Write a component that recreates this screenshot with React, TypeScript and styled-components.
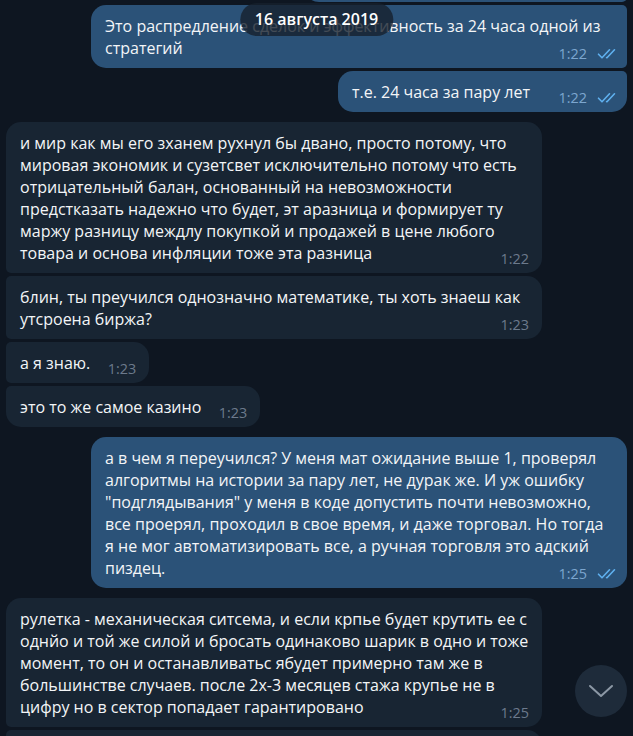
import React from 'react';
import styled, { createGlobalStyle, css } from 'styled-components';

const GlobalStyle = createGlobalStyle`
  html, body {
    margin: 0;
    padding: 0;
    background: #0e1621;
  }
  body {
    font-family: "Open Sans", "Noto Sans", "DejaVu Sans", sans-serif;
    -webkit-font-smoothing: antialiased;
  }
`;

type Side = 'in' | 'out';
type Pos = 'single' | 'first' | 'middle' | 'last';

const Screen = styled.div`
  position: relative;
  width: 633px;
  height: 736px;
  overflow: hidden;
  background: #0e1621;
`;

// scroll offset: the previous message is only just visible at the top
const Feed = styled.div`
  display: flex;
  flex-direction: column;
  padding: 0 6px;
  margin-top: -39px;
`;

const Group = styled.div<{ $side: Side }>`
  display: flex;
  flex-direction: column;
  align-items: ${(p) => (p.$side === 'out' ? 'flex-end' : 'flex-start')};
  gap: 3px;
  margin-bottom: 10px;
`;

const big = '15px';
const small = '5px';

const radius = (side: Side, pos: Pos) => {
  const topIn = pos === 'middle' || pos === 'last' ? small : big;
  const botIn = pos === 'first' || pos === 'middle' ? small : big;
  if (side === 'in') return `${topIn} ${big} ${big} ${botIn}`;
  return `${big} ${topIn} ${botIn} ${big}`;
};

const Bubble = styled.div<{ $side: Side; $pos: Pos }>`
  position: relative;
  box-sizing: border-box;
  max-width: 536px;
  padding: 10px 13px 9px 14px;
  border-radius: ${(p) => radius(p.$side, p.$pos)};
  background: ${(p) => (p.$side === 'out' ? '#2b5278' : '#182533')};
  color: #f3f5f7;
  font-size: 16px;
  line-height: 22px;
  word-wrap: break-word;
`;

const Spacer = styled.span<{ $side: Side }>`
  display: inline-block;
  width: ${(p) => (p.$side === 'out' ? '84px' : '46px')};
  height: 1px;
`;

const Meta = styled.span<{ $side: Side }>`
  position: absolute;
  right: ${(p) => (p.$side === 'out' ? '9px' : '13px')};
  bottom: 6px;
  display: flex;
  align-items: center;
  gap: 10px;
  font-size: 14.4px;
  line-height: 16px;
  ${(p) =>
    p.$side === 'out'
      ? css`
          color: #7ca6cf;
        `
      : css`
          color: #6c7a8c;
        `}
`;

const DateBadge = styled.div`
  position: absolute;
  top: 3px;
  left: 50%;
  transform: translateX(-50%);
  padding: 6px 15px 7px;
  border-radius: 17px;
  background: rgba(22, 33, 45, 0.8);
  color: #ffffff;
  font-size: 16px;
  font-weight: 600;
  line-height: 20px;
  white-space: nowrap;
`;

const ScrollDown = styled.button`
  position: absolute;
  right: 6px;
  bottom: 19px;
  width: 52px;
  height: 52px;
  padding: 0;
  border: none;
  border-radius: 50%;
  background: #1e2b3a;
  display: flex;
  align-items: center;
  justify-content: center;
  cursor: pointer;
`;

function Checks() {
  return (
    <svg width="21" height="12" viewBox="0 0 21 12" fill="none">
      <path d="M1.5 6.2 L5 9.8 L12.5 1.8" stroke="#5fb0ee" strokeWidth="1.6" strokeLinecap="round" strokeLinejoin="round" />
      <path d="M9.6 9.6 L10 9.8 L17.5 1.8" stroke="#5fb0ee" strokeWidth="1.6" strokeLinecap="round" strokeLinejoin="round" />
    </svg>
  );
}

function Message({ side, pos, time, children }: { side: Side; pos: Pos; time: string; children: React.ReactNode }) {
  return (
    <Bubble $side={side} $pos={pos}>
      {children}
      <Spacer $side={side} />
      <Meta $side={side}>
        {time}
        {side === 'out' && <Checks />}
      </Meta>
    </Bubble>
  );
}

export default function App() {
  return (
    <>
      <GlobalStyle />
      <Screen>
        <Feed>
          <Group $side="out">
            <Message side="out" pos="first" time="1:21">
              вот так это выглядит за год
            </Message>
            <Message side="out" pos="middle" time="1:22">
              Это распредление сделок и эффективность за 24 часа одной из стратегий
            </Message>
            <Message side="out" pos="last" time="1:22">
              т.е. 24 часа за пару лет
            </Message>
          </Group>
          <Group $side="in">
            <Message side="in" pos="first" time="1:22">
              и мир как мы его зханем рухнул бы двано, просто потому, что мировая экономик и сузетсвет
              исключительно потому что есть отрицательный балан, основанный на невозможности предстказать
              надежно что будет, эт аразница и формирует ту маржу разницу междлу покупкой и продажей в цене
              любого товара и основа инфляции тоже эта разница
            </Message>
            <Message side="in" pos="middle" time="1:23">
              блин, ты преучился однозначно математике, ты хоть знаеш как утсроена биржа?
            </Message>
            <Message side="in" pos="middle" time="1:23">
              а я знаю.
            </Message>
            <Message side="in" pos="last" time="1:23">
              это то же самое казино
            </Message>
          </Group>
          <Group $side="out">
            <Message side="out" pos="single" time="1:25">
              а в чем я переучился? У меня мат ожидание выше 1, проверял алгоритмы на истории за пару лет, не
              дурак же. И уж ошибку "подглядывания" у меня в коде допустить почти невозможно, все проерял,
              проходил в свое время, и даже торговал. Но тогда я не мог автоматизировать все, а ручная
              торговля это адский пиздец.
            </Message>
          </Group>
          <Group $side="in">
            <Message side="in" pos="first" time="1:25">
              рулетка - механическая ситсема, и если крпье будет крутить ее с однйо и той же силой и бросать
              одинаково шарик в одно и тоже момент, то он и останавливатьс ябудет примерно там же в
              большинстве случаев. после 2х-3 месяцев стажа крупье не в цифру но в сектор попадает
              гарантировано
            </Message>
            <Message side="in" pos="last" time="1:26">
              так и на бирже, крупные игроки двигают цену туда, куда им нужно, а ты просто угадываешь
            </Message>
          </Group>
        </Feed>
        <DateBadge>16 августа 2019</DateBadge>
        <ScrollDown aria-label="Вниз">
          <svg width="26" height="14" viewBox="0 0 26 14" fill="none">
            <path d="M2 2 L13 12 L24 2" stroke="#8c98a5" strokeWidth="2" strokeLinecap="round" strokeLinejoin="round" />
          </svg>
        </ScrollDown>
      </Screen>
    </>
  );
}
